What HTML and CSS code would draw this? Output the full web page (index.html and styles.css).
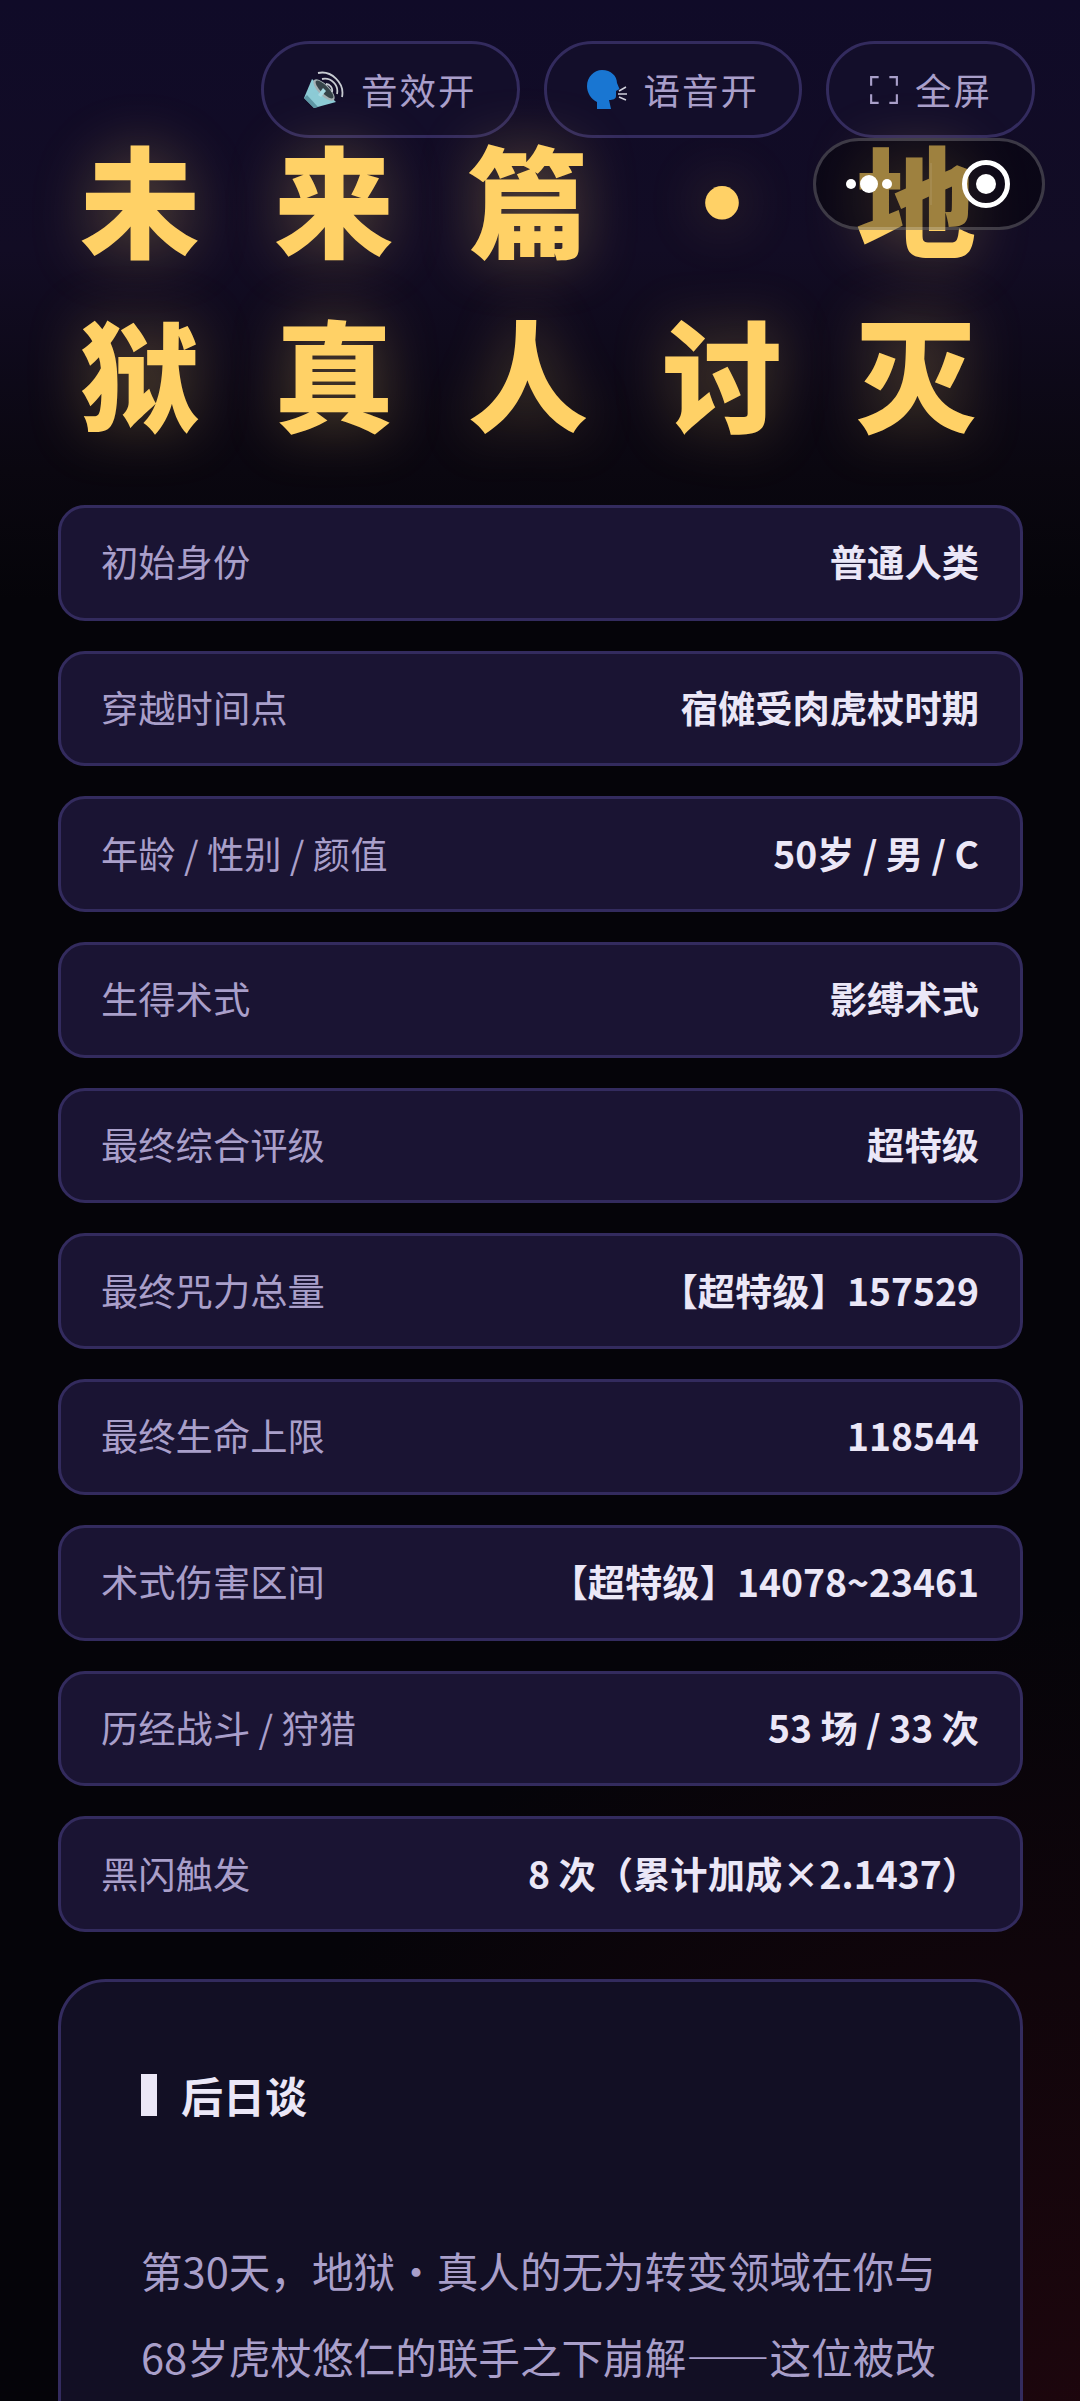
FILE: index.html
```html
<!DOCTYPE html>
<html lang="zh-CN">
<head>
    <meta charset="UTF-8">
    <meta name="viewport" content="width=device-width, initial-scale=1.0">
    <title>未来篇 · 地狱真人讨灭</title>
    <link rel="stylesheet" href="styles.css">
</head>
<body>
    <div class="page">
        <div class="toolbar">
            <div class="tool-btn">
                <svg class="tool-icon" viewBox="0 0 41 39">
                    <path d="M8 9L0 28l10 10 22-6z" fill="#8ccbd6"/>
                    <path d="M0 28l10 10 4-1L3 25z" fill="#5d97a6"/>
                    <ellipse cx="20" cy="20" rx="14" ry="5.500" transform="rotate(45 20 20)" fill="#a4b0b4"/>
                    <ellipse cx="20.500" cy="19.500" rx="12" ry="3.800" transform="rotate(45 20.500 19.500)" fill="#36444a"/>
                    <path d="M14 25l5-7 3 3-5 6z" fill="#a8dbe4"/>
                    <path d="M14 3C27 0 41 13 38 27M18 9C27 7 35 15 33 24M22 14C26 14 29 18 28 22" fill="none" stroke="#c8ccd2" stroke-width="1.8"/>
                </svg>
                <span>音效开</span>
            </div>
            <div class="tool-btn">
                <svg class="tool-icon" viewBox="0 0 41 39">
                    <path d="M15 0C24 0 30 6 30 13l2.500 6-3.500 2v5c0 3-3 4-7 4l2 9H10v-7C4 29 0 23 0 16 0 7 7 0 15 0z" fill="#1976d2"/>
                    <path d="M32 21l7-4M31 24h9M32 27l7 3" fill="none" stroke="#d0d0dc" stroke-width="1.500"/>
                </svg>
                <span>语音开</span>
            </div>
            <div class="tool-btn">
                <svg class="screen-icon" viewBox="0 0 28 28">
                    <path d="M9 2H2v8M19 2h7v8M2 18v8h7M26 18v8h-7" fill="none" stroke="#a99fca" stroke-width="2"/>
                </svg>
                <span>全屏</span>
            </div>
        </div>

        <h1 class="title">
            <span class="title-line">未来篇·地</span>
            <span class="title-line">狱真人讨灭</span>
        </h1>

        <div class="stats">
            <div class="stat-row"><span class="stat-label">初始身份</span><span class="stat-value">普通人类</span></div>
            <div class="stat-row"><span class="stat-label">穿越时间点</span><span class="stat-value">宿傩受肉虎杖时期</span></div>
            <div class="stat-row"><span class="stat-label">年龄 / 性别 / 颜值</span><span class="stat-value">50岁 / 男 / C</span></div>
            <div class="stat-row"><span class="stat-label">生得术式</span><span class="stat-value">影缚术式</span></div>
            <div class="stat-row"><span class="stat-label">最终综合评级</span><span class="stat-value">超特级</span></div>
            <div class="stat-row"><span class="stat-label">最终咒力总量</span><span class="stat-value">【超特级】157529</span></div>
            <div class="stat-row"><span class="stat-label">最终生命上限</span><span class="stat-value">118544</span></div>
            <div class="stat-row"><span class="stat-label">术式伤害区间</span><span class="stat-value">【超特级】14078~23461</span></div>
            <div class="stat-row"><span class="stat-label">历经战斗 / 狩猎</span><span class="stat-value">53 场 / 33 次</span></div>
            <div class="stat-row"><span class="stat-label">黑闪触发</span><span class="stat-value">8 次（累计加成×2.1437）</span></div>
        </div>

        <div class="story">
            <h2 class="story-title">后日谈</h2>
            <p class="story-text">第30天，地狱·真人的无为转变领域在你与68岁虎杖悠仁的联手之下崩解——这位被改</p>
        </div>
    </div>

    <div class="capsule">
        <div class="capsule-dots"><i></i><i class="big"></i><i></i></div>
        <div class="capsule-target"></div>
    </div>
</body>
</html>
```

FILE: styles.css
```css
* {
    margin: 0;
    padding: 0;
    box-sizing: border-box;
    font-family: "Noto Sans CJK SC", "Noto Sans", sans-serif;
}

html, body {
    height: 2401px;
    overflow: hidden;
}

body {
    position: relative;
    background:
        radial-gradient(ellipse 900px 800px at 100% 100%, rgba(90, 12, 24, 0.28), rgba(90, 12, 24, 0) 100%),
        linear-gradient(180deg, #100b28 0, #120c24 250px, #0a0710 470px, #050409 600px, #050409 100%);
}

.page {
    padding: 41px 57px 0 58px;
}

.toolbar {
    display: flex;
    justify-content: flex-end;
    gap: 24px;
    margin-right: -12px;
}

.tool-btn {
    display: flex;
    align-items: center;
    gap: 16px;
    height: 97px;
    padding: 0 40px;
    border: 3px solid #332b5e;
    border-radius: 49px;
    background: #130e2a;
    color: #a99fca;
    font-size: 36.5px;
    letter-spacing: 2px;
}

.tool-icon {
    width: 41px;
    height: 39px;
}

.screen-icon {
    width: 30px;
    height: 30px;
}

.title {
    margin-top: -28px;
    padding-left: 22px;
    color: #ffd166;
    font-size: 120px;
    font-weight: 900;
    line-height: 174px;
    letter-spacing: 74px;
    text-shadow: 0 0 60px rgba(255, 209, 102, 0.3);
}

.title-line {
    display: block;
    white-space: nowrap;
}

.stats {
    display: flex;
    flex-direction: column;
    gap: 30px;
    margin-top: 47px;
}

.stat-row {
    display: flex;
    align-items: center;
    justify-content: space-between;
    height: 115.7px;
    padding: 0 41px 3px 40px;
    border: 3px solid #332b5e;
    border-radius: 27px;
    background: #1a1433;
    font-size: 37.3px;
}

.stat-label {
    color: #a99fca;
}

.stat-value {
    color: #ebe7f7;
    font-weight: 700;
}

.story {
    margin-top: 47px;
    height: 700px;
    padding: 92px 72px 0 80px;
    border: 3px solid #332b5e;
    border-radius: 48px;
    background: #120f24;
}

.story-title {
    padding-left: 24px;
    border-left: 16px solid #ebe7f7;
    color: #ebe7f7;
    font-size: 42px;
    font-weight: 700;
    line-height: 42px;
}

.story-text {
    margin-top: 111px;
    color: #a99fca;
    font-size: 41.6px;
    line-height: 86px;
}

.capsule {
    position: absolute;
    top: 138px;
    left: 813px;
    display: flex;
    align-items: center;
    justify-content: space-between;
    width: 232px;
    height: 92px;
    padding: 0 32px 0 30px;
    border: 3px solid rgba(255, 255, 255, 0.2);
    border-radius: 46px;
    background: rgba(0, 0, 0, 0.38);
}

.capsule::before {
    content: "";
    position: absolute;
    top: 22px;
    bottom: 22px;
    left: 114px;
    width: 2px;
    background: rgba(255, 255, 255, 0.08);
}

.capsule-dots {
    display: flex;
    align-items: center;
    gap: 4px;
}

.capsule-dots i {
    width: 10px;
    height: 10px;
    border-radius: 50%;
    background: #fff;
}

.capsule-dots i.big {
    width: 18px;
    height: 18px;
}

.capsule-target {
    display: flex;
    align-items: center;
    justify-content: center;
    width: 48px;
    height: 48px;
    border: 5px solid #fff;
    border-radius: 50%;
}

.capsule-target::after {
    content: "";
    width: 20px;
    height: 20px;
    border-radius: 50%;
    background: #fff;
}
```
